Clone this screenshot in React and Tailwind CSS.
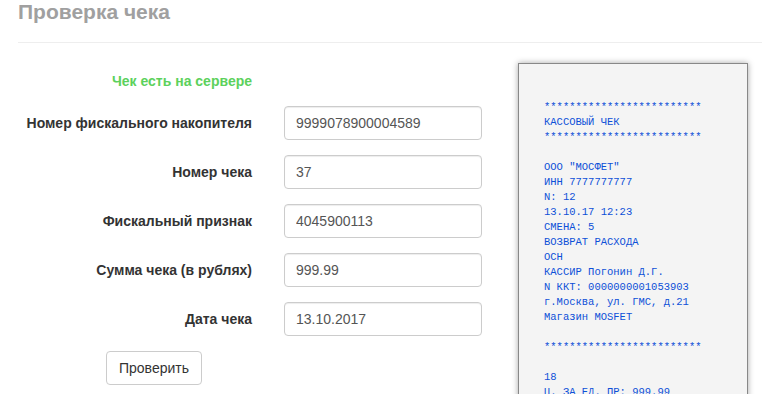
import React from 'react';

const fields = [
  { label: 'Номер фискального накопителя', value: '9999078900004589' },
  { label: 'Номер чека', value: '37' },
  { label: 'Фискальный признак', value: '4045900113' },
  { label: 'Сумма чека (в рублях)', value: '999.99' },
  { label: 'Дата чека', value: '13.10.2017' },
];

const stars = '*'.repeat(25);

const receiptLines = [
  stars,
  'КАССОВЫЙ ЧЕК',
  stars,
  '',
  'ООО "МОСФЕТ"',
  'ИНН 7777777777',
  'N: 12',
  '13.10.17 12:23',
  'СМЕНА: 5',
  'ВОЗВРАТ РАСХОДА',
  'ОСН',
  'КАССИР Погонин Д.Г.',
  'N ККТ: 0000000001053903',
  'г.Москва, ул. ГМС, д.21',
  'Магазин MOSFET',
  '',
  stars,
  '',
  '18',
  'Ц. ЗА ЕД. ПР: 999.99',
];

export default function App() {
  return (
    <div className="h-[394px] overflow-hidden bg-white font-['Liberation_Sans',Arial,sans-serif] text-[#333]">
      <div className="pl-[18px]">
        {/* Header */}
        <div className="border-b border-[#eee] pb-[19px]">
          <h1 className="text-[21px] leading-[1.1] font-bold text-[#a0a0a0]">Проверка чека</h1>
        </div>

        <div className="flex">
          {/* Form */}
          <div className="w-[500px] shrink-0 pt-[27px]">
            <div className="grid grid-cols-[234px_198px] gap-x-[32px] gap-y-[15px]">
              <div className="mt-[1px] h-[20px] text-right text-[14px] leading-[20px] font-bold text-[#5cd15c]">
                Чек есть на сервере
              </div>
              <div />
              {fields.map((f) => (
                <React.Fragment key={f.label}>
                  <label className="flex h-[34px] items-center justify-end text-[14px] font-bold text-[#333]">
                    {f.label}
                  </label>
                  <input
                    type="text"
                    defaultValue={f.value}
                    className="h-[34px] w-[198px] rounded-[4px] border border-[#ccc] px-[11px] text-[14px] text-[#555] shadow-[inset_0_1px_1px_rgba(0,0,0,0.075)] outline-none"
                  />
                </React.Fragment>
              ))}
            </div>
            <div className="mt-[15px] pl-[88px]">
              <button
                type="button"
                className="h-[34px] w-[96px] rounded-[4px] border border-[#ccc] bg-white text-[14px] text-[#333]"
              >
                Проверить
              </button>
            </div>
          </div>

          {/* Receipt */}
          <div className="mt-[20px] h-[420px] w-[230px] shrink-0 border border-[#888] bg-[#f4f4f4] pt-[36px] pl-[25px] shadow-[0_0_6px_rgba(0,0,0,0.35)]">
            <pre className="font-['Courier_New','Liberation_Mono',monospace] text-[10.5px] leading-[15px] text-[#0d50d8]">
              {receiptLines.join('\n')}
            </pre>
          </div>
        </div>
      </div>
    </div>
  );
}
